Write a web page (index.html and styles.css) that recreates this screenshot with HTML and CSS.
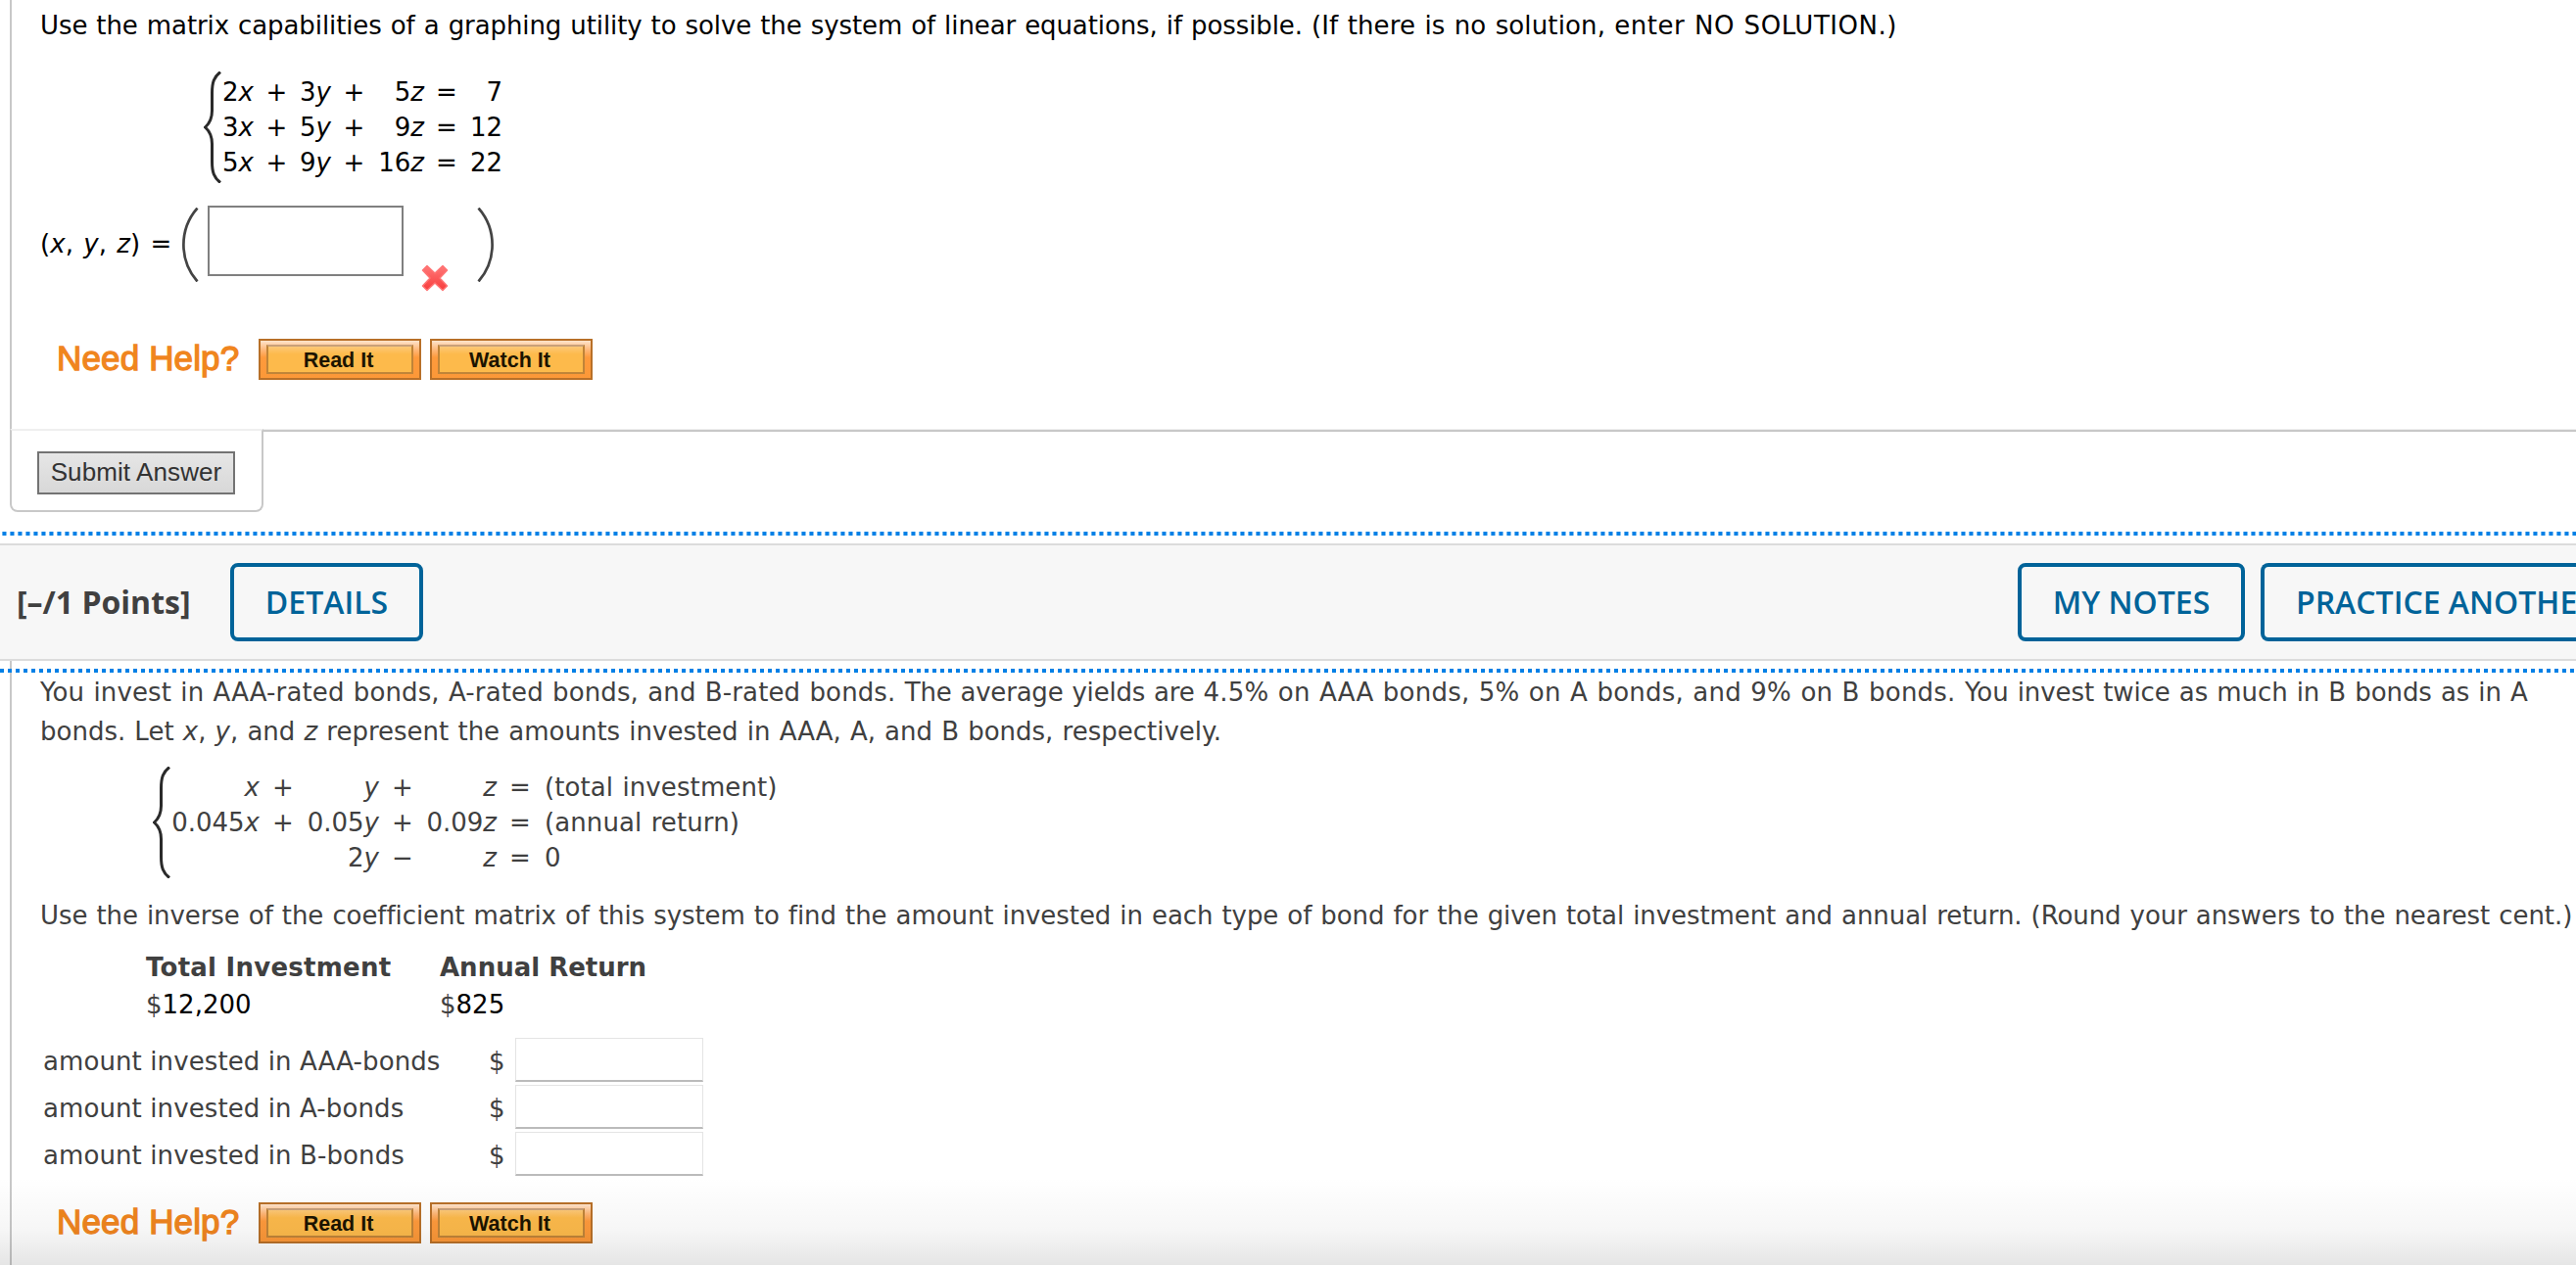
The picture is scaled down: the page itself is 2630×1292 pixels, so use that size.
FILE: index.html
```html
<!DOCTYPE html>
<html lang="en">
<head>
<meta charset="utf-8">
<title>Assignment</title>
<link rel="stylesheet" href="styles.css">
</head>
<body>
<svg class="defs" width="0" height="0" aria-hidden="true">
  <symbol id="brace" viewBox="0 0 18 114"><path d="M17 .5C10.500 5.500 8.500 11 8.500 22V40C8.500 48 6 53 1.500 57C6 61 8.500 66 8.500 74V92C8.500 103 10.500 108.500 17 113.500" fill="none" stroke="currentColor" stroke-width="3"/></symbol>
  <symbol id="paren" viewBox="0 0 18 76"><path d="M16.500 .5C-2.300 22-2.300 54 16.500 75.500" fill="none" stroke="currentColor" stroke-width="2.700"/></symbol>
</svg>
<main class="page">
  <section class="question first">
    <p class="prompt"><span class="ask">Use the matrix capabilities of a graphing utility to solve the system of linear equations, if possible. </span><span class="note">(If there is no solution, </span><span class="none">enter NO SOLUTION.)</span></p>
    <div class="system">
      <svg class="brace"><use href="#brace"/></svg>
      <div class="equations small">
        <span>2<i>x</i></span><b>+</b><span>3<i>y</i></span><b>+</b><span>5<i>z</i></span><b>=</b><span>7</span>
        <span>3<i>x</i></span><b>+</b><span>5<i>y</i></span><b>+</b><span>9<i>z</i></span><b>=</b><span>12</span>
        <span>5<i>x</i></span><b>+</b><span>9<i>y</i></span><b>+</b><span>16<i>z</i></span><b>=</b><span>22</span>
      </div>
    </div>
    <div class="answer">
      <span class="tuple">(<i>x</i>, <i>y</i>, <i>z</i>) =</span>
      <svg class="paren"><use href="#paren"/></svg>
      <span class="answer-box"></span>
      <svg class="wrong" viewBox="0 0 28 28"><defs><linearGradient id="red" x2="0" y2="1"><stop offset="0" stop-color="#ff7878"/><stop offset="1" stop-color="#f83c3c"/></linearGradient></defs><path d="M6 1.500L14 9L22 1.500L26.500 6L19 14L26.500 22L22 26.500L14 19L6 26.500L1.500 22L9 14L1.500 6Z" fill="url(#red)" stroke="#ff7373" stroke-width="1.500" stroke-linejoin="round"/></svg>
      <svg class="paren right"><use href="#paren"/></svg>
    </div>
    <div class="help"><span class="help-label">Need Help?</span><span class="help-button"><em>Read It</em></span><span class="help-button"><em>Watch It</em></span></div>
  </section>
  <div class="submit-row">
    <div class="submit-tab"><span class="submit">Submit Answer</span></div>
    <div class="submit-rule"></div>
  </div>
  <div class="dots"></div>
  <header class="bar">
    <strong class="points">[–/1 Points]</strong>
    <span class="action details">DETAILS</span>
    <span class="action notes">MY NOTES</span>
    <span class="action practice">PRACTICE ANOTHE</span>
  </header>
  <section class="question second">
    <div class="dots lower"></div>
    <p class="prompt body"><span class="kinds">You invest in AAA-rated bonds, A-rated bonds, and B-rated bonds. </span><span class="average">The average yields are </span><span class="yields">4.5% on AAA bonds, 5% on A bonds, and 9% on B bonds. </span><span class="twice">You invest twice as much in B bonds as in A</span><br>bonds. Let <i>x</i>, <i>y</i>, and <i>z</i> represent the amounts invested in AAA, A, and B bonds, respectively.</p>
    <div class="system">
      <svg class="brace"><use href="#brace"/></svg>
      <div class="equations large">
        <span><i>x</i></span><b>+</b><span><i>y</i></span><b>+</b><span><i>z</i></span><b>=</b><span class="words">(total investment)</span>
        <span>0.045<i>x</i></span><b>+</b><span>0.05<i>y</i></span><b>+</b><span>0.09<i>z</i></span><b>=</b><span class="words">(annual return)</span>
        <span></span><b></b><span>2<i>y</i></span><b>−</b><span><i>z</i></span><b>=</b><span class="words">0</span>
      </div>
    </div>
    <p class="prompt task">Use the inverse of the coefficient matrix of this system to find the amount invested in each type of bond for the given total investment and annual return. (Round your answers to the nearest cent.)</p>
    <div class="totals">
      <strong class="total">Total Investment</strong><strong>Annual Return</strong>
      <span>$<mark>12,200</mark></span><span>$<mark>825</mark></span>
    </div>
    <div class="amounts">
      <span class="amount-label">amount invested in AAA-bonds</span><span>$</span><span class="field"></span>
      <span class="amount-label">amount invested in A-bonds</span><span>$</span><span class="field"></span>
      <span class="amount-label">amount invested in B-bonds</span><span>$</span><span class="field"></span>
    </div>
    <div class="help"><span class="help-label">Need Help?</span><span class="help-button"><em>Read It</em></span><span class="help-button"><em>Watch It</em></span></div>
  </section>
  <div class="fade"></div>
</main>
</body>
</html>
```

FILE: styles.css
```css
* { box-sizing: border-box; }
body { margin: 0; background: #fff; }
.defs { position: absolute; }
.page {
  position: relative;
  width: 2630px;
  height: 1292px;
  overflow: hidden;
  font: 26px/36px Verdana, "DejaVu Sans", sans-serif;
  color: #404040;
}
.question { margin-left: 10px; border-left: 2px solid #c8c8c8; padding-left: 29px; }
.first { height: 438px; padding-top: 6px; color: #000; }
.prompt { margin: 0; line-height: 40px; white-space: nowrap; word-spacing: 0.9px; }
.ask { letter-spacing: -0.095px; }
.note { letter-spacing: 0.13px; }
.none { letter-spacing: 0.52px; }
.kinds { letter-spacing: 0.12px; }
.average { letter-spacing: -0.2px; }
.yields { letter-spacing: 0.22px; }
.twice { letter-spacing: -0.07px; }
.system { display: flex; align-items: center; height: 114px; }
.first .system { margin: 27px 0 0 167px; }
.brace { width: 18px; height: 114px; flex: none; color: #2a2a2a; }
.equations { display: grid; grid-auto-rows: 36px; text-align: right; white-space: nowrap; }
.equations b { font-weight: 400; text-align: center; }
.equations .words { text-align: left; padding-left: 1px; word-spacing: 0.9px; letter-spacing: 0.1px; }
.small { margin-left: 1px; grid-template-columns: 32px 47px 32px 47px 48px 46px 34px; }
.large { grid-template-columns: 91px 48px 74px 48px 72px 48px auto; }

.answer { display: flex; height: 90px; margin-top: 23px; }
.tuple { width: 144px; padding-top: 21px; white-space: nowrap; word-spacing: 1.6px; letter-spacing: 0.15px; }
.paren { width: 18px; height: 76px; margin-top: 2px; color: #444; }
.right { transform: scaleX(-1); margin-left: 28px; }
.answer-box { width: 200px; height: 72px; margin-left: 9px; border: 2px solid #808080; }
.wrong { width: 28px; height: 28px; margin: 60px 0 0 18px; }
.wrong + .right { margin-left: 29px; }

.help { display: flex; height: 42px; align-items: center; font-family: Arial, "Liberation Sans", sans-serif; }
.first .help { margin-top: 46px; }
.help-label {
  width: 206px;
  margin-left: 17px;
  padding-bottom: 2px;
  font-size: 35px;
  letter-spacing: 0.15px;
  -webkit-text-stroke: 1.3px #f0851e;
  color: #f0851e;
  white-space: nowrap;
}
.help-button {
  display: flex;
  width: 166px;
  height: 42px;
  margin-right: 9px;
  padding: 4px 6px;
  border: 2px solid #b87028;
  background: linear-gradient(#ffe4cc, #ffb87a 24%, #ff9a3c 45%, #fc9838);
}
.help-button em {
  flex: 1;
  padding-right: 3px;
  border: 2px solid #c08438;
  border-top-color: #c9a07a;
  background: linear-gradient(#fdc878, #fdba4b 30%);
  color: #1c1400;
  font: 700 21.5px/28px Arial, "Liberation Sans", sans-serif;
  text-align: center;
}
.submit-row { display: flex; height: 85px; margin-left: 10px; }
.submit-tab {
  width: 259px;
  padding: 21px 26px;
  border: 2px solid #c8c8c8;
  border-top-color: #efefef;
  border-radius: 0 0 8px 8px;
}
.submit {
  display: block;
  width: 202px;
  height: 44px;
  border: 2px solid #737373;
  background: linear-gradient(#e6e6e6, #d8d8d8);
  color: #333;
  font: 26px/39px Arial, "Liberation Sans", sans-serif;
  letter-spacing: 0.1px;
  text-align: center;
  white-space: nowrap;
}
.submit-rule { flex: 1; height: 3px; border-top: 1px solid #efefef; border-bottom: 2px solid #c8c8c8; }
.dots {
  height: 4px;
  margin: 20px 0 0 2px;
  background: repeating-linear-gradient(90deg, #66b3f0 0 1px, #0080e6 1px 4px, #80c0f3 4px 5px, #fff 5px 8px);
}
.bar {
  display: flex;
  align-items: center;
  height: 120px;
  margin-top: 8px;
  padding-left: 17px;
  border: solid #dcdcdc;
  border-width: 2px 0;
  background: #f7f7f7;
  font: 32px/44px "Open Sans", sans-serif;
  white-space: nowrap;
}
.points { width: 218px; }
.action {
  flex: none;
  height: 80px;
  padding-top: 14px;
  border: 4px solid #006399;
  border-radius: 8px;
  color: #006399;
  font-weight: 600;
  text-align: center;
}
.details { width: 197px; }
.notes { width: 232px; margin-left: auto; }
.practice { width: 322px; margin-left: 16px; padding-left: 32px; text-align: left; border-right: 0; border-radius: 8px 0 0 8px; }
.second { height: 617px; padding-top: 8px; }
.lower {
  margin: 0 0 0 -41px;
  background: repeating-linear-gradient(90deg, #0080e6 0 4px, #fff 4px 8px);
}
.second .system { margin: 96px 0 0 115px; }
.body { height: 0; }
.task { margin-top: 18px; letter-spacing: -0.075px; }
.totals { display: grid; grid-template-columns: 300px auto; grid-template-rows: 38px 38px; margin-left: 108px; margin-top: 14px; line-height: 38px; white-space: nowrap; }
.total { letter-spacing: 0.25px; }
.totals mark { background: none; color: #000; }
.amounts { display: grid; grid-template-columns: 455px 27px 192px; grid-template-rows: 45px 45px 45px; row-gap: 3px; margin: 15px 0 0 3px; line-height: 48px; white-space: nowrap; }
.amount-label { letter-spacing: 0.1px; }
.field { border: 1px solid #e4e4e4; border-bottom: 2px solid #bbb; background: #fff; }
.second .help { margin-top: 27px; }
.fade { position: absolute; left: 0; right: 0; bottom: 0; height: 90px; background: linear-gradient(rgba(0,0,0,0), rgba(0,0,0,.035) 60%, rgba(0,0,0,.1)); }
```
